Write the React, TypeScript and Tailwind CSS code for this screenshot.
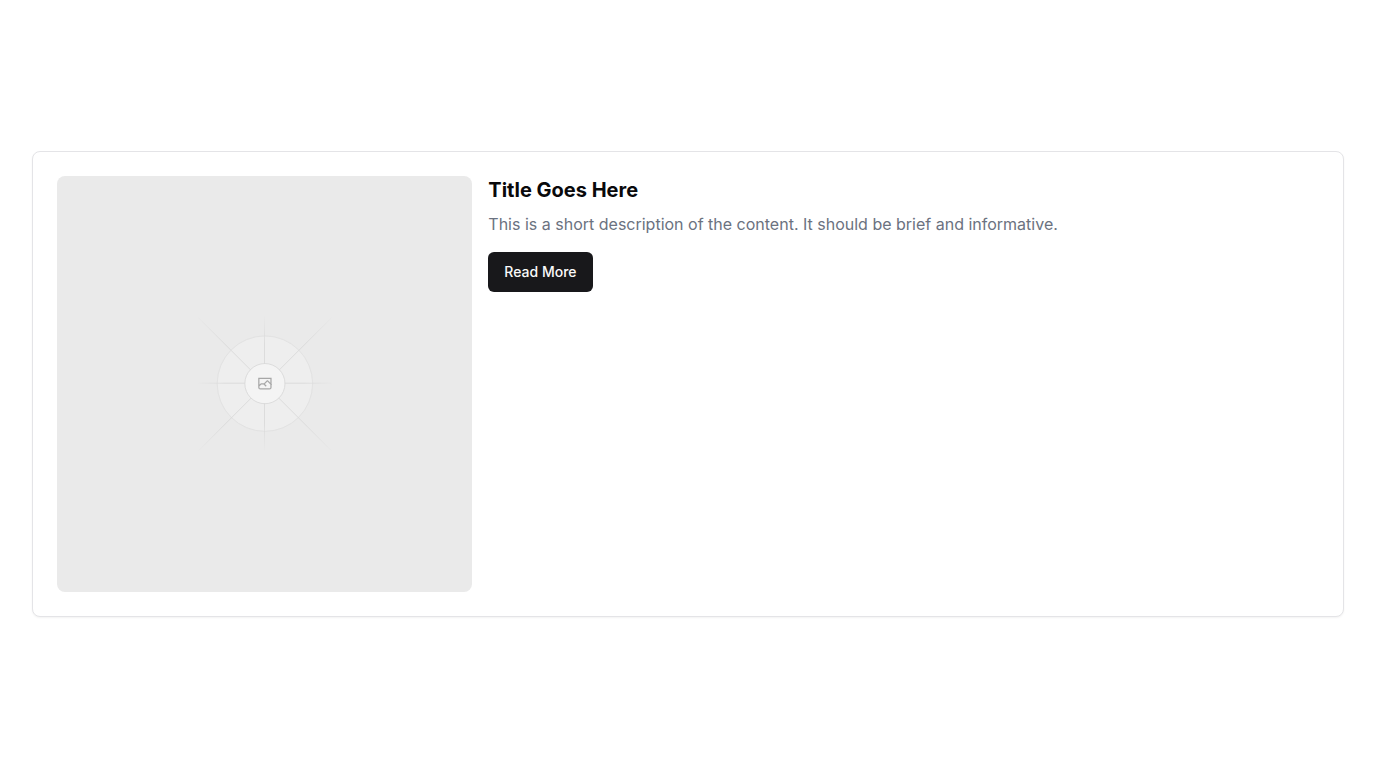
function PlaceholderImage() {
  return (
    <div className="aspect-square self-start rounded-lg bg-[#eaeaea]">
      <svg
        viewBox="0 0 1200 1200"
        fill="none"
        role="img"
        aria-label="Placeholder"
        className="block w-full"
      >
        <g opacity=".5">
          <g opacity=".5">
            <circle cx="600.709" cy="599.88" r="136.621" fill="#FAFAFA" />
            <circle cx="600.709" cy="599.88" r="137.83" stroke="#C9C9C9" strokeWidth="2.418" />
          </g>
          <path
            stroke="url(#rising)"
            strokeWidth="2.418"
            d="M0-1.209h553.581"
            transform="scale(1 -1) rotate(45 1163.11 91.165)"
          />
          <path stroke="url(#level)" strokeWidth="2.418" d="M404.846 598.671h391.726" />
          <path stroke="url(#upright)" strokeWidth="2.418" d="M599.5 795.742V404.017" />
          <path stroke="url(#falling)" strokeWidth="2.418" d="m795.717 796.597-391.441-391.44" />
          <circle cx="600.709" cy="599.88" r="56.824" fill="#fff" />
          <path
            fill="#666"
            fillRule="evenodd"
            clipRule="evenodd"
            d="M616.426 586.58h-31.434v16.176l3.553-3.554.531-.531h9.068l.074-.074 8.463-8.463h2.565l7.18 7.181V586.58Zm-15.715 14.654 3.698 3.699 1.283 1.282-2.565 2.565-1.282-1.283-5.2-5.199h-6.066l-5.514 5.514-.073.073v2.876a2.418 2.418 0 0 0 2.418 2.418h26.598a2.418 2.418 0 0 0 2.418-2.418v-8.317l-8.463-8.463-7.181 7.181-.071.072Zm-19.347 5.442v4.085a6.045 6.045 0 0 0 6.046 6.045h26.598a6.044 6.044 0 0 0 6.045-6.045v-7.108l1.356-1.355-1.282-1.283-.074-.073v-17.989h-38.689v23.43l-.146.146.146.147Z"
          />
          <circle cx="600.709" cy="599.88" r="58.033" stroke="#C9C9C9" strokeWidth="2.418" />
        </g>
        <defs>
          <linearGradient id="rising" x1="554.061" x2="-.48" y1=".083" y2=".087" gradientUnits="userSpaceOnUse">
            <stop stopColor="#C9C9C9" stopOpacity="0" />
            <stop offset=".208" stopColor="#C9C9C9" />
            <stop offset=".792" stopColor="#C9C9C9" />
            <stop offset="1" stopColor="#C9C9C9" stopOpacity="0" />
          </linearGradient>
          <linearGradient id="level" x1="796.912" x2="404.507" y1="599.963" y2="599.965" gradientUnits="userSpaceOnUse">
            <stop stopColor="#C9C9C9" stopOpacity="0" />
            <stop offset=".208" stopColor="#C9C9C9" />
            <stop offset=".792" stopColor="#C9C9C9" />
            <stop offset="1" stopColor="#C9C9C9" stopOpacity="0" />
          </linearGradient>
          <linearGradient id="upright" x1="600.792" x2="600.794" y1="403.677" y2="796.082" gradientUnits="userSpaceOnUse">
            <stop stopColor="#C9C9C9" stopOpacity="0" />
            <stop offset=".208" stopColor="#C9C9C9" />
            <stop offset=".792" stopColor="#C9C9C9" />
            <stop offset="1" stopColor="#C9C9C9" stopOpacity="0" />
          </linearGradient>
          <linearGradient id="falling" x1="404.85" x2="796.972" y1="403.903" y2="796.02" gradientUnits="userSpaceOnUse">
            <stop stopColor="#C9C9C9" stopOpacity="0" />
            <stop offset=".208" stopColor="#C9C9C9" />
            <stop offset=".792" stopColor="#C9C9C9" />
            <stop offset="1" stopColor="#C9C9C9" stopOpacity="0" />
          </linearGradient>
        </defs>
      </svg>
    </div>
  );
}

export default function App() {
  return (
    <main className="flex min-h-screen items-center bg-white px-8 font-['Inter',sans-serif] text-[#09090b]">
      <article className="grid w-full grid-cols-[1fr_2fr] gap-4 rounded-lg border border-[#e4e4e7] bg-white p-6 shadow-[0_1px_2px_0_rgb(0_0_0/0.05)]">
        <PlaceholderImage />
        <div>
          <h2 className="text-xl font-bold">Title Goes Here</h2>
          <p className="mt-2 text-base text-[#6b7280]">
            This is a short description of the content. It should be brief and informative.
          </p>
          <button
            type="button"
            className="mt-4 h-10 rounded-md bg-[#18181b] px-4 text-sm font-medium text-[#fafafa]"
          >
            Read More
          </button>
        </div>
      </article>
    </main>
  );
}
